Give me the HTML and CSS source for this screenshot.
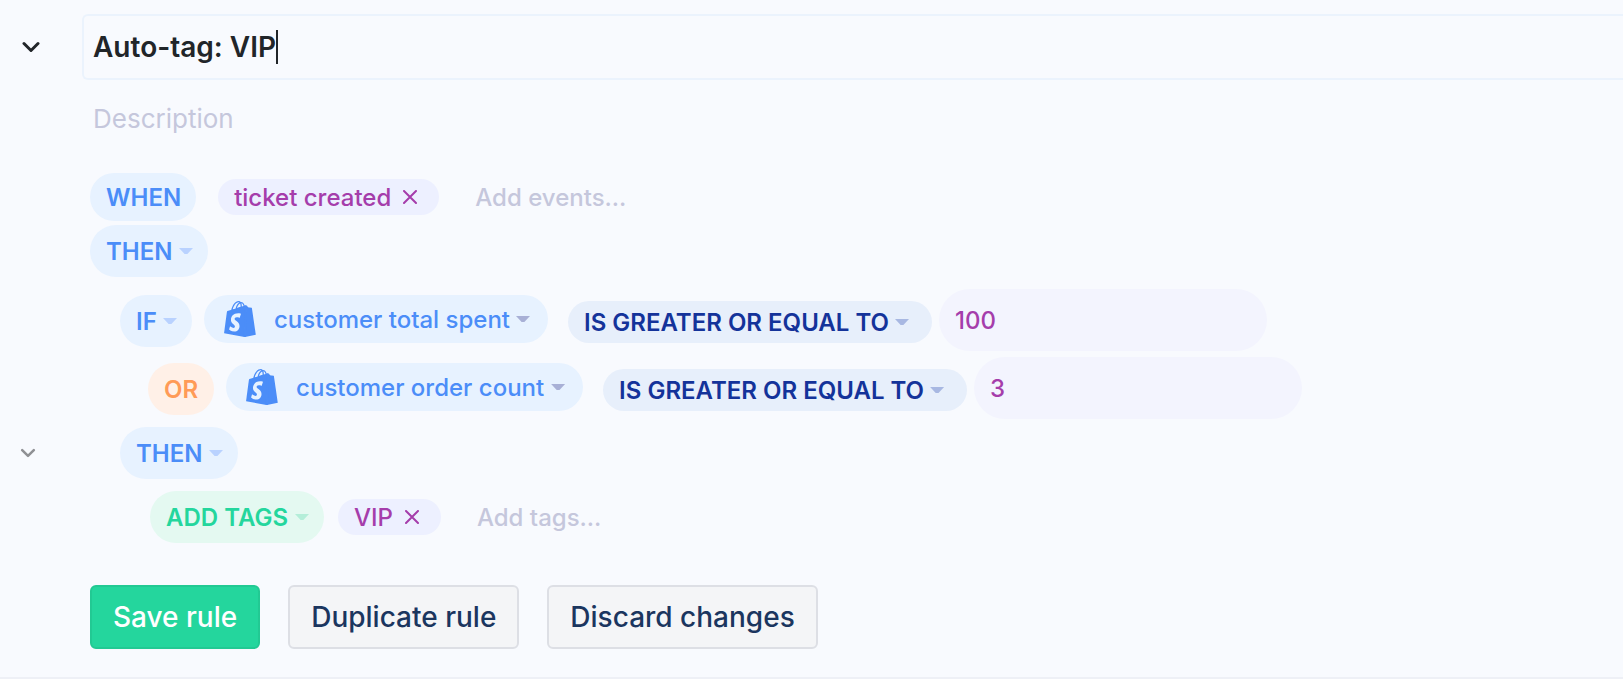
FILE: index.html
```html
<!DOCTYPE html>
<html lang="en">

<head>
    <meta charset="utf-8">
    <title>Auto-tag: VIP</title>
    <link rel="stylesheet" href="styles.css">
</head>

<body>
    <svg class="sprite" aria-hidden="true">
        <symbol id="shopify" viewBox="1.4 0 21.2 24">
            <path d="M15.337 23.979l7.216-1.561s-2.604-17.613-2.625-17.73c-.018-.116-.114-.192-.211-.192s-1.929-.136-1.929-.136-1.275-1.274-1.439-1.411c-.045-.037-.075-.057-.121-.074l-.914 21.104h.023zM11.71 11.305s-.81-.424-1.774-.424c-1.447 0-1.504.906-1.504 1.141 0 1.232 3.24 1.715 3.24 4.629 0 2.295-1.44 3.76-3.406 3.76-2.354 0-3.54-1.465-3.54-1.465l.646-2.086s1.245 1.066 2.28 1.066c.675 0 .975-.545.975-.932 0-1.619-2.654-1.694-2.654-4.359-.034-2.237 1.571-4.416 4.827-4.416 1.257 0 1.875.361 1.875.361l-.945 2.715-.02.01zM11.17.83c.136 0 .271.038.405.135-.984.465-2.064 1.639-2.508 3.992-.656.213-1.293.405-1.889.578C7.697 3.75 8.951.84 11.17.84V.83zm1.235 2.949v.135c-.754.232-1.583.484-2.394.736.466-1.777 1.333-2.645 2.085-2.971.193.501.309 1.176.309 2.1zm.539-2.234c.694.074 1.141.867 1.429 1.755-.349.114-.735.231-1.158.366v-.252c0-.752-.096-1.371-.271-1.871v.002zm2.992 1.289c-.02 0-.06.021-.078.021s-.289.075-.714.21c-.423-1.233-1.176-2.37-2.508-2.37h-.115C12.135.209 11.669 0 11.265 0 8.159 0 6.675 3.877 6.21 5.846c-1.194.365-2.063.636-2.16.674-.675.213-.694.232-.772.87-.075.462-1.83 14.063-1.83 14.063L15.009 24l.927-21.166z"/>
            <path d="M14.5 23.9l.93-20.9 1.3.2-.9 20.65-.8.15z"/>
        </symbol>
        <symbol id="chevron" viewBox="0 0 18 12">
            <path d="M2 2.5l7 7 7-7" fill="none" stroke="currentColor" stroke-width="3" stroke-linecap="round" stroke-linejoin="round"/>
        </symbol>
        <symbol id="cross" viewBox="0 0 14 14">
            <path d="M1 1l12 12M13 1L1 13" fill="none" stroke="currentColor" stroke-width="2" stroke-linecap="round"/>
        </symbol>
    </svg>

    <form class="rule">
        <div class="row row-name">
            <button type="button" class="toggle" aria-label="Collapse rule"><svg><use href="#chevron"/></svg></button>
            <div class="name-box">
                <input class="name" type="text" value="Auto-tag: VIP" aria-label="Rule name">
                <span class="cursor"></span>
            </div>
        </div>
        <div class="row row-description">
            <input class="description" type="text" placeholder="Description" aria-label="Description">
        </div>

        <div class="row row-when">
            <div class="line">
                <span class="pill when">WHEN</span>
                <span class="token">ticket created <button type="button" aria-label="Remove ticket created"><svg><use href="#cross"/></svg></button></span>
                <input class="add" type="text" placeholder="Add events..." aria-label="Add events">
            </div>
        </div>
        <div class="row row-then">
            <div class="line">
                <label class="pill"><select aria-label="Block"><option>THEN</option></select></label>
            </div>
        </div>

        <div class="row row-condition">
            <div class="line level-1">
                <label class="pill"><select aria-label="Condition block"><option>IF</option></select></label>
                <label class="variable">
                    <svg><use href="#shopify"/></svg>
                    <select aria-label="Variable"><option>customer total spent</option></select>
                </label>
                <label class="operator"><select aria-label="Operator"><option>IS GREATER OR EQUAL TO</option></select></label>
                <input class="value" type="text" value="100" aria-label="Value">
            </div>
        </div>
        <div class="row row-condition">
            <div class="line level-2">
                <button type="button" class="pill or">OR</button>
                <label class="variable">
                    <svg><use href="#shopify"/></svg>
                    <select aria-label="Variable"><option>customer order count</option></select>
                </label>
                <label class="operator"><select aria-label="Operator"><option>IS GREATER OR EQUAL TO</option></select></label>
                <input class="value" type="text" value="3" aria-label="Value">
            </div>
        </div>
        <div class="row row-then-inner">
            <button type="button" class="toggle small" aria-label="Collapse block"><svg><use href="#chevron"/></svg></button>
            <div class="line level-1">
                <label class="pill"><select aria-label="Block"><option>THEN</option></select></label>
            </div>
        </div>
        <div class="row row-action">
            <div class="line level-2">
                <label class="pill action"><select aria-label="Action"><option>ADD TAGS</option></select></label>
                <span class="token">VIP <button type="button" aria-label="Remove VIP"><svg><use href="#cross"/></svg></button></span>
                <input class="add" type="text" placeholder="Add tags..." aria-label="Add tags">
            </div>
        </div>

        <div class="row">
            <div class="line buttons">
                <button type="submit" class="btn save">Save rule</button>
                <button type="button" class="btn">Duplicate rule</button>
                <button type="button" class="btn">Discard changes</button>
            </div>
        </div>
    </form>
</body>

</html>
```
FILE: styles.css
```css
* {
    box-sizing: border-box;
}

body {
    margin: 0;
    background-color: #ffffff;
    font-family: Inter, "Liberation Sans", sans-serif;
    font-size: 24px;
    overflow-x: hidden;
}

input, select, button {
    font: inherit;
    color: inherit;
    margin: 0;
    padding: 0;
    border: none;
    outline: none;
    background: none;
}

select {
    appearance: none;
}

button {
    cursor: pointer;
}

::placeholder {
    color: #c5c7dc;
    opacity: 1;
}

.sprite {
    display: none;
}

.rule {
    padding: 14px 0 28px;
    background-color: #f8fafe;
    border-bottom: 2px solid #eef0f6;
}

/* left gutter for the toggles, rule content on the right */
.row {
    display: grid;
    grid-template-columns: 82px 1fr;
    align-items: center;
}

.row > :last-child {
    grid-column: 2;
}

.line {
    display: flex;
    align-items: center;
    padding-left: 8px;
}

.level-1 {
    padding-left: 38px;
}

.level-2 {
    padding-left: 68px;
}

.toggle {
    justify-self: start;
    display: flex;
    margin-left: 22px;
    color: #212529;
}

.toggle svg {
    width: 18px;
    height: 12px;
}

.toggle.small {
    margin-left: 20px;
    color: #8f9094;
}

.toggle.small svg {
    width: 16px;
    height: 10px;
}

.name-box {
    display: flex;
    align-items: center;
    height: 66px;
    padding-left: 9px;
    border: 2px solid #ebf3fd;
    border-right: none;
    border-radius: 6px 0 0 6px;
    color: #212529;
    font-size: 28px;
    font-weight: 600;
}

.name {
    field-sizing: content;
}

.cursor {
    width: 2px;
    height: 34px;
    background-color: #212529;
}

.description {
    height: 40px;
    margin: 18px 0 34px;
    padding-left: 11px;
    font-size: 26px;
}

.pill {
    display: flex;
    align-items: center;
    height: 52px;
    padding: 0 15px 0 16px;
    border-radius: 26px;
    background-color: #e7f2ff;
    color: #4b8df8;
    font-weight: 600;
}

.pill.when {
    height: 48px;
    margin-right: 22px;
}

.pill.or {
    padding: 0 16px;
    background-color: #fff0e7;
    color: #ff9b57;
}

.pill.action {
    margin-right: 14px;
    background-color: #e4f9f1;
    color: #24d69d;
}

/* drop-down arrow */
label::after {
    content: "";
    width: 14px;
    height: 6px;
    margin-left: 6px;
    background-color: #b9d2ff;
    clip-path: polygon(0 0, 100% 0, 60% 100%, 40% 100%);
}

.action::after {
    background-color: #b4eed9;
}

.variable::after {
    background-color: #a8b0d6;
}

.operator::after {
    background-color: #a8b8e2;
}

.token {
    display: flex;
    align-items: center;
    height: 36px;
    padding: 0 22px 0 16px;
    border-radius: 18px;
    background-color: #edf0ff;
    color: #a53dab;
    font-weight: 500;
}

.token button {
    display: flex;
    margin-left: 12px;
}

.token svg {
    width: 14px;
    height: 14px;
}

.add {
    flex: 1;
    margin-left: 36px;
    font-weight: 500;
}

.row-then {
    margin-top: 4px;
    margin-bottom: 12px;
}

.row-when {
    margin-top: 1px;
}

.row-condition {
    margin-bottom: 6px;
}

.row-condition .line {
    align-items: flex-start;
}

.row-condition .level-2 {
    padding-left: 66px;
}

.row-condition .pill {
    margin-top: 6px;
    margin-right: 12px;
}

.variable {
    display: flex;
    align-items: center;
    height: 48px;
    margin-top: 6px;
    margin-right: 20px;
    padding: 0 18px 0 20px;
    border-radius: 24px;
    background-color: #e7f2ff;
    color: #4b8df8;
    font-weight: 500;
}

.variable svg {
    width: 32px;
    height: 36px;
    margin-right: 18px;
    fill: #4b8df8;
}

.operator {
    display: flex;
    align-items: center;
    height: 42px;
    margin-top: 12px;
    margin-right: 7px;
    padding: 0 23px 0 16px;
    border-radius: 21px;
    background-color: #e7effb;
    color: #14339a;
    font-weight: 600;
}

.value {
    width: 328px;
    height: 62px;
    padding: 0 16px;
    border-radius: 31px;
    background-color: #f3f4fe;
    color: #a53dab;
    font-weight: 500;
}

.row-then-inner {
    margin-top: 8px;
    margin-bottom: 12px;
}

.buttons {
    gap: 28px;
    margin-top: 42px;
}

.btn {
    height: 64px;
    padding: 0 21px;
    border: 2px solid #dddfe5;
    border-radius: 6px;
    background-color: #f4f5f7;
    color: #1b365f;
    font-size: 28px;
    font-weight: 500;
}

.btn.save {
    background-color: #24d69d;
    border-color: #22c993;
    color: #ffffff;
}
```
